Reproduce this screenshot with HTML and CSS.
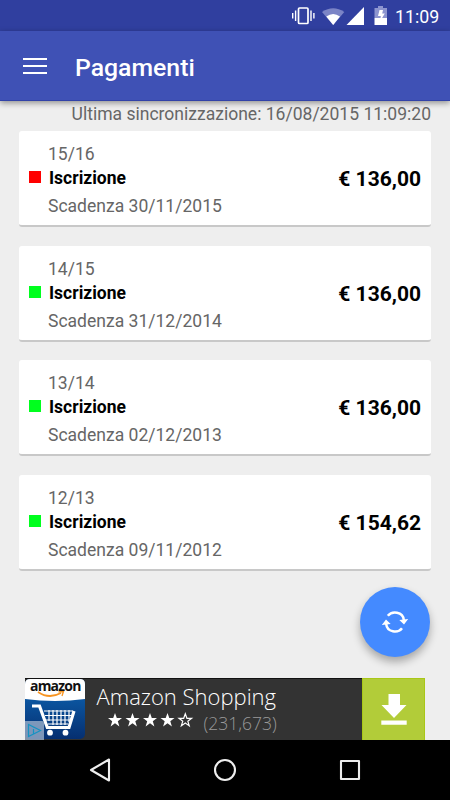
FILE: index.html
```
<!DOCTYPE html>
<html lang="it">
<head>
<meta charset="utf-8">
<title>Pagamenti</title>
<link rel="stylesheet" href="styles.css">
</head>
<body>
<div class="screen">
  <header class="status">
    <svg class="status-icons" width="100" height="31" viewBox="290 0 100 31">
      <g fill="none" stroke="#fff" stroke-width="1.4"><rect x="298.5" y="8" width="9.5" height="15.5" rx="1" stroke-width="1.7"/><path d="M295.6 10.5v10.5M292.7 13v5.5M311 10.5v10.5M313.900 13v5.5"/></g>
      <path fill="#7b84c6" d="M322 12Q333.200 4.500 344.300 12L333.200 25z"/>
      <path fill="#fff" d="M326.300 16.600Q333.200 11.500 340 16.600L333.200 25z"/>
      <path fill="#fff" d="M346.500 25L364 7V25z"/>
      <path fill="#8d95cf" d="M378 6h5v2h4v10h-12.500V8H378z"/>
      <path fill="#fff" d="M374.500 18h12.500v7h-12.500z"/>
      <path fill="#fff" d="M379.500 10h3.500l-.8 3.500h2.600l-4.800 8 .8-5.500h-2.800z"/>
    </svg>
    <span class="clock">11:09</span>
  </header>
  <nav class="appbar">
    <svg width="24" height="16" viewBox="0 0 24 16"><path d="M0 1h24M0 8h24M0 15h24" stroke="#fff" stroke-width="2"/></svg>
    <h1 class="title">Pagamenti</h1>
  </nav>
  <main class="content">
    <p class="sync">Ultima sincronizzazione: 16/08/2015 11:09:20</p>
    <div class="cards">
      <article class="card">
        <div class="details"><p class="year">15/16</p><p class="name"><i class="mark due"></i><b>Iscrizione</b></p><p class="expiry">Scadenza 30/11/2015</p></div>
        <span class="price">€ 136,00</span>
      </article>
      <article class="card">
        <div class="details"><p class="year">14/15</p><p class="name"><i class="mark"></i><b>Iscrizione</b></p><p class="expiry">Scadenza 31/12/2014</p></div>
        <span class="price">€ 136,00</span>
      </article>
      <article class="card">
        <div class="details"><p class="year">13/14</p><p class="name"><i class="mark"></i><b>Iscrizione</b></p><p class="expiry">Scadenza 02/12/2013</p></div>
        <span class="price">€ 136,00</span>
      </article>
      <article class="card">
        <div class="details"><p class="year">12/13</p><p class="name"><i class="mark"></i><b>Iscrizione</b></p><p class="expiry">Scadenza 09/11/2012</p></div>
        <span class="price">€ 154,62</span>
      </article>
    </div>
    <button class="fab" aria-label="Sincronizza">
      <svg width="70" height="70" viewBox="0 0 70 70"><g fill="none" stroke="#fff" stroke-width="2.500"><path d="M27.800 28.800C32 23.500 43 24.500 43.800 33"/><path d="M42 41.200C38 46.500 27 45.500 26.200 37"/></g><path fill="#fff" d="M39.300 32.900l8.900-.8-4.200 5.400zM30.700 37.100l-8.900.8 4.200-5.400z"/></svg>
    </button>
  </main>
  <section class="ad">
    <div class="app-icon">
      <svg class="app-art" width="60" height="62" viewBox="0 0 60 62">
        <defs><linearGradient id="blue" x2="0" y2="1"><stop offset=".3" stop-color="#0b57a2"/><stop offset="1" stop-color="#062f70"/></linearGradient></defs>
        <rect y="1" width="60" height="60" rx="5" fill="url(#blue)"/>
        <path fill="#fff" d="M0 21V6q0-5 5-5h50q5 0 5 5v15Q30 25 0 21z"/>
        <path d="M13 14q11 7.500 23 1" fill="none" stroke="#f79421" stroke-width="1.800"/><path d="M33.500 14l5-.5-1.500 4.500" fill="none" stroke="#f79421" stroke-width="1.300"/>
        <path d="M7 28h7.500l7.800 21.500h21.700l5-16.500" fill="none" stroke="#fff" stroke-width="3.200"/>
        <path d="M19 33h29M20 37.500h27M21 42h25M24 32v11M28 32v15M32 32v15M36 32v15M40 32v15M44 32v12M23 46h20" stroke="#fff" stroke-width="1.200"/>
        <circle cx="25" cy="54.700" r="2.900" fill="#fff"/><circle cx="40.500" cy="54.700" r="2.900" fill="#fff"/>
        <path fill="#9aafc9" fill-opacity=".8" d="M0 43h17q2 0 2 2v17H0z"/>
        <path d="M3.500 46.500v12l12-6zM8.500 51v4.500M8.500 48.800v1" fill="none" stroke="#1593c3" stroke-width="1.200"/>
      </svg>
      <span class="brand">amazon</span>
    </div>
    <div class="ad-copy">
      <p class="ad-title">Amazon Shopping</p>
      <div class="rating">
        <svg width="86" height="16" viewBox="0 0 86 16">
          <defs><path id="star" d="M7 0l1.800 5h5.200l-4.200 3.200 1.600 5.200L7 10.300l-4.400 3.100 1.600-5.200L0 5h5.200z"/></defs>
          <g fill="#fff"><use href="#star" x="0" y="1"/><use href="#star" x="17.500" y="1"/><use href="#star" x="35" y="1"/><use href="#star" x="52.500" y="1"/></g>
          <use href="#star" transform="translate(71 1.800) scale(.9)" fill="none" stroke="#fff" stroke-width="1.300"/>
        </svg>
        <span class="votes">(231,673)</span>
      </div>
    </div>
    <div class="download">
      <svg width="26" height="32" viewBox="0 0 26 32"><path fill="#fff" d="M7.500 0h11.500v11h6.500L13 24 .5 11h7zM.3 26.500h25.400v4.200H.3z"/></svg>
    </div>
  </section>
  <footer class="navbar">
    <svg width="450" height="60" viewBox="0 0 450 60" fill="none" stroke="#eee" stroke-width="2.100" stroke-linejoin="round"><path d="M109 19.500v21L91 30z"/><circle cx="225" cy="30" r="10"/><rect x="341" y="21" width="18" height="18"/></svg>
  </footer>
</div>
</body>
</html>
```
FILE: styles.css
```
* { box-sizing: border-box; }
body, p, h1 { margin: 0; }
.screen {
  width: 450px;
  height: 800px;
  display: flex;
  flex-direction: column;
  overflow: hidden;
  background: #eee;
  font-family: Roboto, sans-serif;
}
.status {
  height: 31px;
  flex: none;
  display: flex;
  justify-content: flex-end;
  padding-right: 10px;
  background: #303f9f;
  color: #fff;
}
.status-icons { flex: none; margin-right: 5px; }
.clock {
  width: 45px;
  font-size: 17.8px;
  font-weight: 400;
  line-height: 33px;
  white-space: nowrap;
}
.appbar {
  height: 70px;
  flex: none;
  display: flex;
  align-items: center;
  gap: 28px;
  padding-left: 23px;
  background: #3f51b5;
  box-shadow: 0 2px 6px rgba(0, 0, 0, .4);
  border-bottom: 1px solid #3142a8;
  z-index: 1;
}
.title {
  color: #fff;
  font-size: 24.8px;
  font-weight: 500;
  line-height: 32px;
  padding-top: 4px;
}
.content {
  height: 577px;
  flex: none;
  display: flex;
  flex-direction: column;
  padding: 3px 19px 0;
}
.sync {
  height: 20px;
  color: #666;
  font-size: 17.55px;
  line-height: 20px;
  text-align: right;
  white-space: nowrap;
}
.cards {
  display: grid;
  gap: 18.6px;
  margin-top: 7px;
}
.card {
  height: 96px;
  display: flex;
  justify-content: space-between;
  align-items: center;
  padding: 0 10px 0 10px;
  border-bottom: 2.5px solid #c8c8c8;
  border-radius: 3px;
  background: #fff;
}
.details { padding: 8px 0 0 19px; white-space: nowrap; }
.year, .expiry {
  color: #666;
  font-size: 17.55px;
  line-height: 24px;
}
.name {
  display: flex;
  align-items: center;
  gap: 8px;
  margin-left: -19px;
  color: #000;
  font-size: 17.5px;
  line-height: 24px;
}
.expiry { line-height: 32px; }
.mark { width: 12px; height: 12px; margin-top: -2px; background: #00ff1e; }
.due { background: #f00; }
.price {
  padding-top: 2px;
  color: #000;
  font-size: 21px;
  font-weight: 700;
}
.fab {
  width: 70px;
  height: 70px;
  align-self: flex-end;
  margin: 16px 1px 0 0;
  padding: 0;
  border: 0;
  border-radius: 50%;
  background: #448aff;
  box-shadow: 0 5px 9px rgba(0, 0, 0, .3);
}
.fab svg { display: block; }
.ad {
  width: 400px;
  height: 62px;
  flex: none;
  display: flex;
  align-self: center;
  border-top: 1px solid #111;
  background: #333;
  font-family: "Open Sans", sans-serif;
}
.app-icon { position: relative; width: 60px; flex: none; }
.app-art { display: block; margin-top: -1px; }
.brand {
  position: absolute;
  top: -1px;
  left: 5px;
  color: #111;
  font-size: 14px;
  font-weight: 700;
  line-height: 16px;
  letter-spacing: -.8px;
}
.ad-copy { flex: 1; padding: 4px 0 0 11.5px; }
.ad-title {
  color: #fff;
  font-size: 22px;
  font-weight: 300;
  line-height: 27px;
  white-space: nowrap;
}
.rating {
  display: flex;
  align-items: center;
  gap: 10px;
  height: 17px;
  margin: 4px 0 0 11px;
}
.rating svg { margin-top: -5px; }
.votes {
  color: #999;
  font-size: 17.5px;
  font-weight: 300;
  line-height: 18px;
}
.download {
  width: 63px;
  flex: none;
  display: flex;
  align-items: center;
  justify-content: center;
  margin-top: -1px;
  border: 1px solid #a9c717;
  border-bottom: 0;
  background: #b2cc39;
}
.navbar { height: 60px; flex: none; background: #000; }
.navbar svg { display: block; }
```
